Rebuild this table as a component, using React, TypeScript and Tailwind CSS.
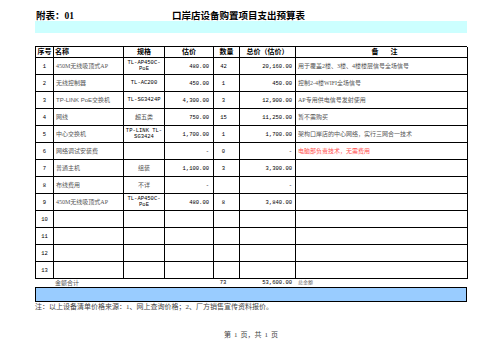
import React from 'react';

const cjk = '"Liberation Serif", "Noto Sans CJK SC", serif';
const sans = '"Liberation Sans", "Noto Sans CJK SC", sans-serif';
const mono = '"Liberation Mono", "Noto Sans CJK SC", monospace';

interface Row {
  no: string;
  name?: string;
  spec?: string[];
  price?: string;
  qty?: string;
  total?: string;
  note?: string;
  red?: boolean;
}

const rows: Row[] = [
  { no: '1', name: '450M无线吸顶式AP', spec: ['TL-AP450C-', 'PoE'], price: '480.00', qty: '42', total: '20,160.00', note: '用于覆盖2楼、3楼、4楼楼层信号全场信号' },
  { no: '2', name: '无线控制器', spec: ['TL-AC200'], price: '450.00', qty: '1', total: '450.00', note: '控制2-4楼WIFI全场信号' },
  { no: '3', name: 'TP-LINK PoE交换机', spec: ['TL-SG3424P'], price: '4,300.00', qty: '3', total: '12,900.00', note: 'AP专用供电信号发射使用' },
  { no: '4', name: '网线', spec: ['超五类'], price: '750.00', qty: '15', total: '11,250.00', note: '暂不需购买' },
  { no: '5', name: '中心交换机', spec: ['TP-LINK TL-', 'SG3424'], price: '1,700.00', qty: '1', total: '1,700.00', note: '架构口岸店的中心网络，实行三网合一技术' },
  { no: '6', name: '网络调试安装费', price: '-', qty: '0', total: '-', note: '电脑部负责技术，无需费用', red: true },
  { no: '7', name: '普通主机', spec: ['组装'], price: '1,100.00', qty: '3', total: '3,300.00' },
  { no: '8', name: '布线费用', spec: ['不详'], price: '-', total: '-' },
  { no: '9', name: '450M无线吸顶式AP', spec: ['TL-AP450C-', 'PoE'], price: '480.00', qty: '8', total: '3,840.00' },
  { no: '10' },
  { no: '11' },
  { no: '12' },
  { no: '13' },
];

const cols = 'grid grid-cols-[18px_70px_41px_49px_26px_56px_172px]';
const cell = 'border-r border-b border-black flex items-center overflow-hidden whitespace-nowrap';

function SpecCell({ spec }: { spec?: string[] }) {
  if (!spec) return <div className={`${cell} h-[17px]`} />;
  const isLatin = /^[A-Za-z0-9 -]+$/.test(spec[0]);
  return (
    <div
      className={`${cell} h-[17px] flex-col justify-center text-center ${isLatin ? 'text-[5.5px] leading-[6px] text-black' : 'text-[6px] leading-[7px] text-[#555]'}`}
      style={{ fontFamily: isLatin ? mono : cjk }}
    >
      {spec.map((s) => (
        <span key={s}>{s}</span>
      ))}
    </div>
  );
}

export default function App() {
  return (
    <div className="w-[503px] h-[356px] bg-white overflow-hidden" style={{ fontFamily: cjk }}>
      <div className="ml-[35px] w-[432px] pt-[11px]">
        <div className="flex h-[10px] items-center text-[9.5px] font-bold text-black leading-[10px]">
          <span className="w-[137px] pl-[1px]">附表：01</span>
          <span>口岸店设备购置项目支出预算表</span>
        </div>
        <div className="h-[12px] bg-[#ccffff]" />

        <div className="mt-[13px] border-t border-l border-black">
          <div className={`${cols} text-[7px] font-bold text-black leading-[8px]`}>
            <div className={`${cell} h-[11px] justify-center`}>序号</div>
            <div className={`${cell} h-[11px] pl-[1px]`}>名称</div>
            <div className={`${cell} h-[11px] justify-center`}>规格</div>
            <div className={`${cell} h-[11px] justify-center`}>估价</div>
            <div className={`${cell} h-[11px] justify-center`}>数量</div>
            <div className={`${cell} h-[11px] justify-center`}>总价（估价）</div>
            <div className={`${cell} h-[11px] justify-center gap-[12px] pl-[6px]`}>
              <span>备</span>
              <span>注</span>
            </div>
          </div>
          {rows.map((r) => (
            <div key={r.no} className={`${cols} text-[6px] leading-[7px]`}>
              <div className={`${cell} h-[17px] justify-center text-[5.5px] text-black`} style={{ fontFamily: mono }}>
                {r.no}
              </div>
              <div className={`${cell} h-[17px] pl-[2px] text-[#555]`} style={{ fontFamily: r.name?.startsWith('TP') ? sans : cjk }}>
                {r.name}
              </div>
              <SpecCell spec={r.spec} />
              <div className={`${cell} h-[17px] justify-end pr-[4px] text-[5.5px] text-black`} style={{ fontFamily: mono }}>
                {r.price}
              </div>
              <div className={`${cell} h-[17px] justify-center pr-[6px] text-[5.5px] text-black`} style={{ fontFamily: mono }}>
                {r.qty}
              </div>
              <div className={`${cell} h-[17px] justify-end pr-[3px] text-[5.5px] text-black`} style={{ fontFamily: mono }}>
                {r.total}
              </div>
              <div className={`${cell} h-[17px] pl-[2px] ${r.red ? 'text-[#ff4d4d]' : 'text-[#555]'}`}>{r.note}</div>
            </div>
          ))}
        </div>

        <div className={`${cols} h-[8px] items-center text-[6px] leading-[8px]`}>
          <div />
          <div className="pl-[2px] text-[#555]">金额合计</div>
          <div />
          <div />
          <div className="text-center pr-[6px] text-[5.5px] text-black" style={{ fontFamily: mono }}>
            73
          </div>
          <div className="text-right pr-[3px] text-[5.5px] text-black" style={{ fontFamily: mono }}>
            53,600.00
          </div>
          <div className="pl-[3px] text-[5px] text-[#666]">总金额</div>
        </div>

        <div className="h-[15px] border border-black bg-[#99ccff]" />

        <div className="h-[9px] flex items-center text-[7px] leading-[8px] text-[#444] whitespace-nowrap">
          注：以上设备清单价格来源：1、网上查询价格；2、厂方销售宣传资料报价。
        </div>

        <div className="mt-[20px] flex justify-center gap-[3px] text-[7px] leading-[8px] text-[#444]">
          <span>第</span>
          <span>1</span>
          <span>页，共</span>
          <span>1</span>
          <span>页</span>
        </div>
      </div>
    </div>
  );
}
